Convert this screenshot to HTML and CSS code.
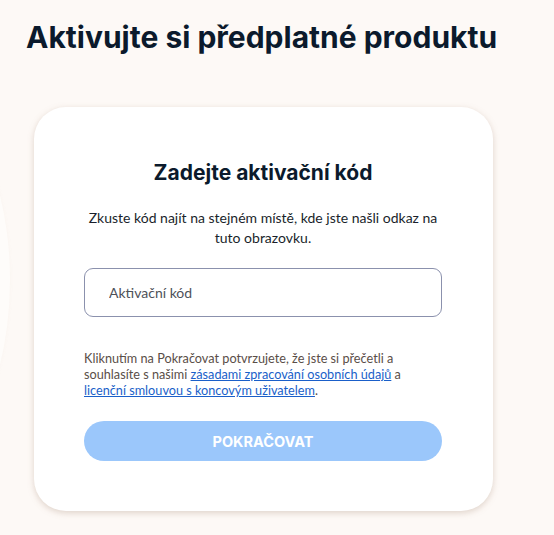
FILE: index.html
```html
<!DOCTYPE html>
<html lang="cs">
<head>
    <meta charset="UTF-8">
    <meta name="viewport" content="width=device-width, initial-scale=1.0">
    <title>Aktivace předplatného</title>
    <link rel="stylesheet" href="styles.css">
</head>
<body>
    <div class="backdrop-arc"></div>

    <main class="page">
        <h1 class="page-title">Aktivujte si předplatné produktu</h1>

        <section class="activate-card">
            <h2 class="card-title">Zadejte aktivační kód</h2>
            <p class="card-hint">Zkuste kód najít na stejném místě, kde jste našli odkaz na tuto obrazovku.</p>

            <form class="activate-form" onsubmit="event.preventDefault()">
                <input type="text" class="code-input" placeholder="Aktivační kód">

                <p class="legal">
                    Kliknutím na Pokračovat potvrzujete, že jste si přečetli a souhlasíte s našimi
                    <a href="#">zásadami zpracování osobních údajů</a> a
                    <a href="#">licenční smlouvou s koncovým uživatelem</a>.
                </p>

                <button type="submit" class="continue-btn" disabled>Pokračovat</button>
            </form>
        </section>
    </main>
</body>
</html>
```

FILE: styles.css
```css
* {
    margin: 0;
    padding: 0;
    box-sizing: border-box;
}

html,
body {
    height: 100%;
    overflow: hidden;
}

body {
    font-family: Inter, "Noto Sans", sans-serif;
    background-color: #fdf9f6;
    color: #0d1b2a;
    position: relative;
}

/* faint curved shape along the left edge */
.backdrop-arc {
    position: absolute;
    left: -300px;
    top: 40px;
    width: 310px;
    height: 480px;
    border-radius: 50%;
    background: #fefcfa;
    box-shadow: 1px 0 3px rgba(200, 180, 160, 0.04);
}

.page {
    position: relative;
    padding: 18px 0 0 26px;
}

.page-title {
    font-size: 30px;
    font-weight: 700;
    line-height: 38px;
    color: #0b1a2c;
}

.activate-card {
    width: 459px;
    margin: 51px 0 0 8px;
    padding: 52px 51px 50px 50px;
    background: white;
    border-radius: 32px;
    box-shadow: 0 2px 6px rgba(170, 140, 120, 0.35);
    text-align: center;
}

.card-title {
    font-size: 21px;
    font-weight: 700;
    line-height: 28px;
    color: #0b1a2c;
}

.card-hint {
    margin: 21px auto 0;
    max-width: 357px;
    font-family: Lato, "Noto Sans", sans-serif;
    font-size: 14px;
    line-height: 20px;
    color: #1a1f2b;
}

.activate-form {
    margin-top: 20px;
    text-align: left;
}

.code-input {
    width: 100%;
    height: 49px;
    padding: 0 24px;
    border: 1px solid #8b91ad;
    border-radius: 9px;
    font-family: Lato, "Noto Sans", sans-serif;
    font-size: 14px;
    color: #1a1f2b;
}

.code-input::placeholder {
    color: #4d5159;
}

.code-input:focus {
    outline: none;
    border-color: #1f6fdc;
}

.legal {
    margin-top: 33px;
    font-family: Lato, "Noto Sans", sans-serif;
    font-size: 12.7px;
    line-height: 16px;
    color: #5a4e48;
}

.legal a {
    color: #1a5fc9;
}

.continue-btn {
    width: 100%;
    height: 40px;
    margin-top: 23px;
    border: none;
    border-radius: 20px;
    background: #9bc7fb;
    color: white;
    font-family: inherit;
    font-size: 14.5px;
    font-weight: 700;
    text-transform: uppercase;
    cursor: pointer;
}

.continue-btn:disabled {
    cursor: default;
}
```
